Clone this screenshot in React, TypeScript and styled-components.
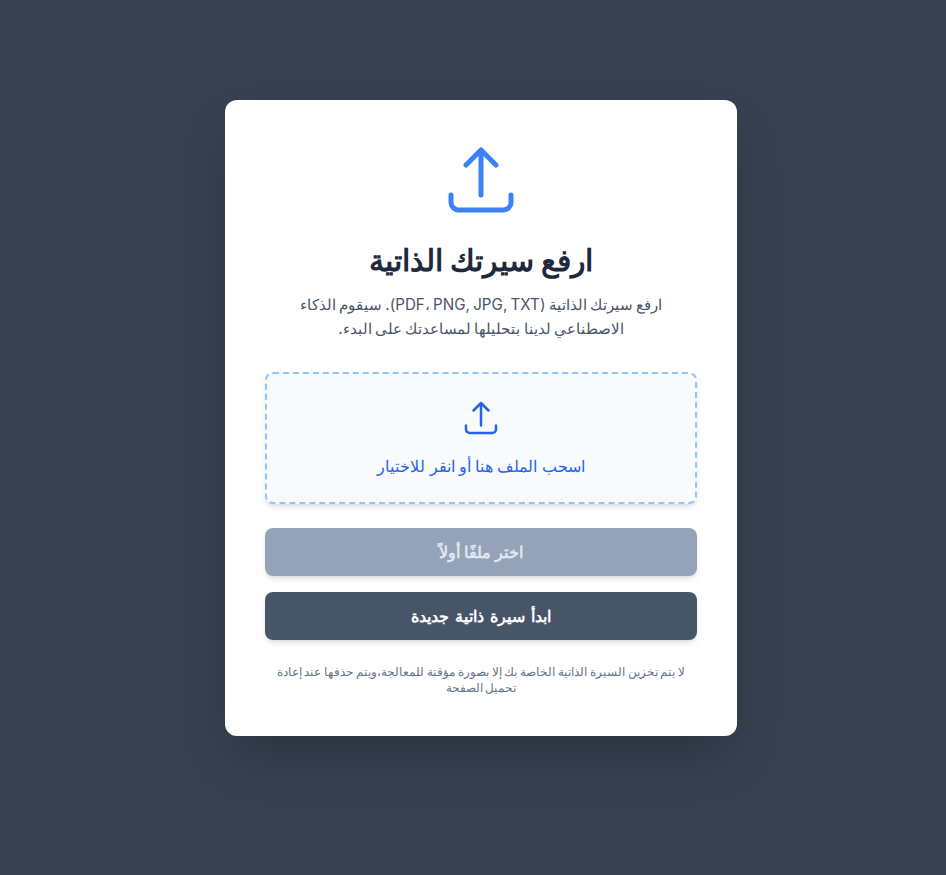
import * as React from "react";
import styled, { createGlobalStyle } from "styled-components";

const Global = createGlobalStyle`
  * { box-sizing: border-box; }
  html, body { margin: 0; padding: 0; }
  body {
    background: #374151;
    font-family: Inter, "Noto Sans", sans-serif;
  }
`;

const UploadIcon = ({ size }: { size: number }) => (
  <svg
    width={size}
    height={size}
    viewBox="0 0 24 24"
    fill="none"
    stroke="currentColor"
    strokeWidth={1.5}
    strokeLinecap="round"
    strokeLinejoin="round"
  >
    <path d="M3 16.5v2.25A2.25 2.25 0 0 0 5.25 21h13.5A2.25 2.25 0 0 0 21 18.75V16.5m-13.5-9L12 3m0 0 4.5 4.5M12 3v13.5" />
  </svg>
);

export default function App() {
  return (
    <Page dir="rtl">
      <Global />
      <Card>
        <HeroIcon>
          <UploadIcon size={80} />
        </HeroIcon>
        <Title>ارفع سيرتك الذاتية</Title>
        <Intro>
          ارفع سيرتك الذاتية (PDF، PNG, JPG, TXT). سيقوم الذكاء الاصطناعي لدينا
          بتحليلها لمساعدتك على البدء.
        </Intro>
        <DropZone>
          <DropIcon>
            <UploadIcon size={40} />
          </DropIcon>
          <DropText>اسحب الملف هنا أو انقر للاختيار</DropText>
        </DropZone>
        <Button $variant="disabled">اختر ملفًا أولاً</Button>
        <Button $variant="dark">ابدأ سيرة ذاتية جديدة</Button>
        <Note>
          لا يتم تخزين السيرة الذاتية الخاصة بك إلا بصورة مؤقتة للمعالجة،ويتم
          حذفها عند إعادة تحميل الصفحة
        </Note>
      </Card>
    </Page>
  );
}

const Page = styled.div`
  min-height: 875px;
  display: flex;
  align-items: flex-start;
  justify-content: center;
  padding: 100px 0 0 16px;
`;

const Card = styled.div`
  width: 512px;
  height: 636px;
  background: #fff;
  border-radius: 12px;
  padding: 40px;
  display: flex;
  flex-direction: column;
  align-items: center;
  box-shadow: 0 25px 50px -12px rgba(0, 0, 0, 0.25);
`;

const HeroIcon = styled.div`
  color: #3b82f6;
  display: flex;
  margin-bottom: 22px;
`;

const Title = styled.h1`
  margin: 0 0 15px;
  font-size: 30px;
  line-height: 36px;
  font-weight: 700;
  color: #1e293b;
  text-align: center;
`;

const Intro = styled.p`
  margin: 0 0 31px;
  font-size: 15.2px;
  line-height: 24px;
  word-spacing: -1px;
  color: #475569;
  text-align: center;
  max-width: 384px;
`;

const DropZone = styled.div`
  width: 100%;
  height: 132px;
  border: 2px dashed #93c5fd;
  border-radius: 8px;
  background: #f8fafc;
  display: flex;
  flex-direction: column;
  align-items: center;
  padding-top: 24px;
  gap: 16px;
  margin-bottom: 24px;
  box-shadow: 0 4px 6px -1px rgba(0, 0, 0, 0.1), 0 2px 4px -2px rgba(0, 0, 0, 0.1);
`;

const DropIcon = styled.div`
  color: #2563eb;
  display: flex;
`;

const DropText = styled.div`
  font-size: 16px;
  line-height: 24px;
  font-weight: 500;
  color: #2563eb;
`;

const Button = styled.button<{ $variant: "disabled" | "dark" }>`
  width: 100%;
  height: 48px;
  border: 0;
  border-radius: 8px;
  font: inherit;
  font-size: 16px;
  font-weight: 700;
  word-spacing: ${(p) => (p.$variant === "dark" ? "2px" : "0")};
  margin-bottom: 16px;
  background: ${(p) => (p.$variant === "dark" ? "#475569" : "#94a3b8")};
  color: ${(p) => (p.$variant === "dark" ? "#fff" : "#e2e8f0")};
  box-shadow: 0 4px 6px -1px rgba(0, 0, 0, 0.1), 0 2px 4px -2px rgba(0, 0, 0, 0.1);
`;

const Note = styled.p`
  margin: 8px 0 0;
  max-width: 416px;
  font-size: 11.8px;
  line-height: 16px;
  word-spacing: -0.5px;
  color: #64748b;
  text-align: center;
`;
